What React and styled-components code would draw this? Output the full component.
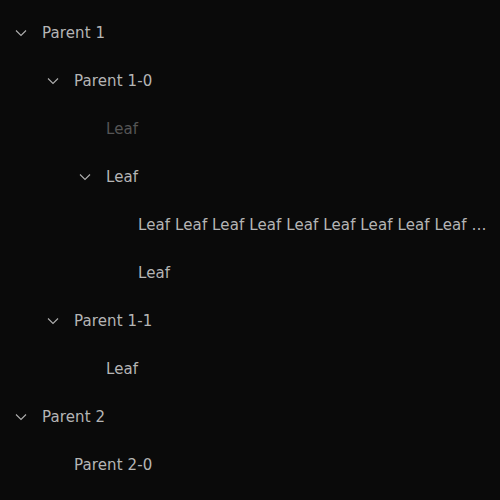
import React from 'react';
import styled, { createGlobalStyle } from 'styled-components';

const GlobalStyle = createGlobalStyle`
  html, body {
    margin: 0;
    background: #0a0a0a;
  }
`;

const Tree = styled.div`
  width: 500px;
  height: 500px;
  box-sizing: border-box;
  padding: 9px 10px 8px 8px;
  background: #0a0a0a;
  font-family: 'DejaVu Sans', 'Verdana', sans-serif;
  font-size: 15px;
  letter-spacing: 0.1px;
  color: #b5b5b5;
  overflow: hidden;
`;

const Row = styled.div`
  display: flex;
  align-items: center;
  height: 48px;
  padding-left: ${p => p.level * 32}px;
`;

const Switcher = styled.span`
  flex: none;
  width: 26px;
  display: flex;
  justify-content: center;
  align-items: center;
  margin-right: 8px;
`;

const Title = styled.span`
  flex: 1;
  min-width: 0;
  white-space: nowrap;
  overflow: hidden;
  text-overflow: ellipsis;
  color: ${p => (p.disabled ? '#555555' : '#b5b5b5')};
`;

const Chevron = () => (
  <svg width="12" height="8" viewBox="0 0 12 8" fill="none">
    <path d="M1 1.5 L6 6.5 L11 1.5" stroke="#b0b0b0" strokeWidth="1.1" />
  </svg>
);

const nodes = [
  { level: 0, title: 'Parent 1', open: true },
  { level: 1, title: 'Parent 1-0', open: true },
  { level: 2, title: 'Leaf', disabled: true },
  { level: 2, title: 'Leaf', open: true },
  { level: 3, title: Array(12).fill('Leaf').join(' ') },
  { level: 3, title: 'Leaf' },
  { level: 1, title: 'Parent 1-1', open: true },
  { level: 2, title: 'Leaf' },
  { level: 0, title: 'Parent 2', open: true },
  { level: 1, title: 'Parent 2-0' },
];

const App = () => (
  <>
    <GlobalStyle />
    <Tree>
      {nodes.map((n, i) => (
        <Row key={i} level={n.level}>
          <Switcher>{n.open && <Chevron />}</Switcher>
          <Title disabled={n.disabled}>{n.title}</Title>
        </Row>
      ))}
    </Tree>
  </>
);

export default App;
